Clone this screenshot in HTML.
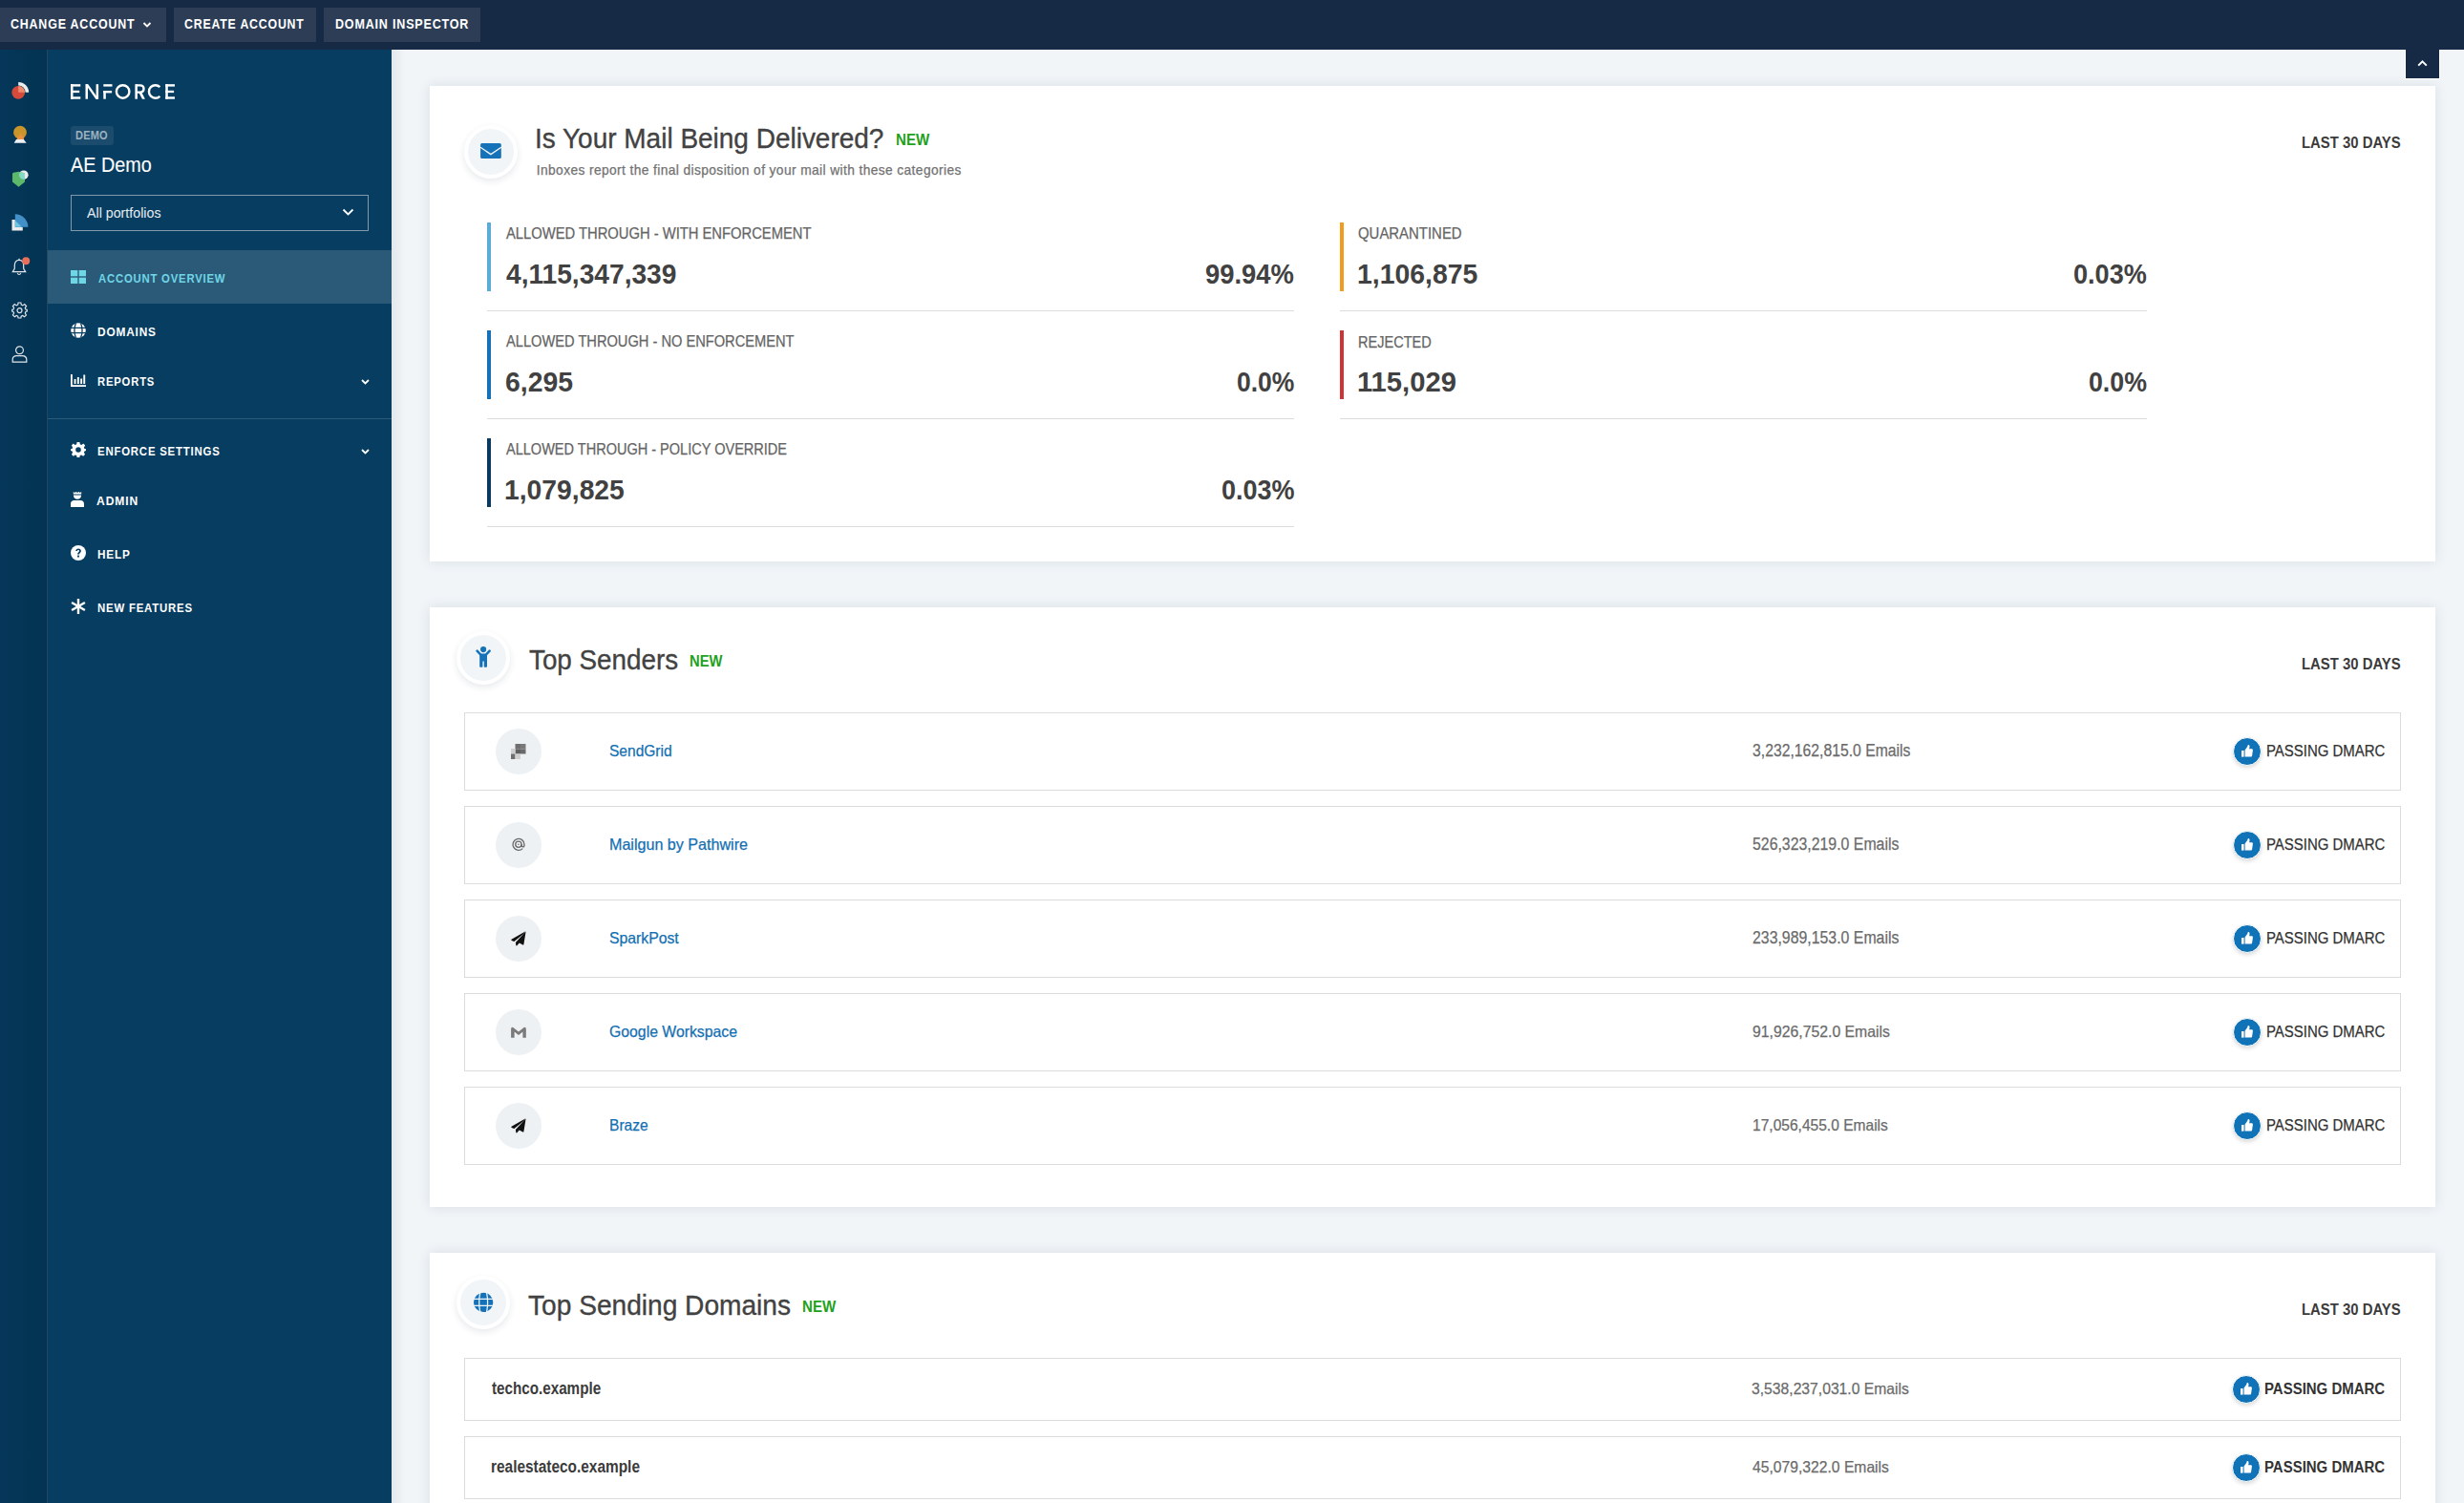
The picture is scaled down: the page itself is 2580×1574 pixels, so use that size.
<!DOCTYPE html><html><head><meta charset="utf-8"><style>
*{margin:0;padding:0;box-sizing:border-box}
html,body{width:2580px;height:1574px;overflow:hidden;background:#f1f5f8;font-family:"Liberation Sans",sans-serif}
.box{position:absolute}
.t{position:absolute;white-space:nowrap}
.hcirc{width:56px;height:56px;border-radius:50%;background:#f2f5f8;border:4px solid #fff;box-shadow:0 3px 7px rgba(20,40,60,.10)}
.lcirc{width:48px;height:48px;border-radius:50%;background:#eef1f3}
.srow{border:1px solid #dcdcdc;background:#fff}
.thumb{width:30px;height:30px;border-radius:50%;background:#1073b8;border:1.5px solid #fff;box-shadow:0 2px 4px rgba(0,0,0,.15)}
.card{background:#fff;box-shadow:0 0 12px rgba(40,60,80,.12)}
</style></head><body>
<div class="box" style="left:0;top:0;width:2580px;height:52px;background:#172a45"></div>
<div class="box" style="left:0px;top:8px;width:174px;height:36px;background:#2d3d56"></div>
<div class="box" style="left:182px;top:8px;width:149px;height:36px;background:#2d3d56"></div>
<div class="box" style="left:339px;top:8px;width:164px;height:36px;background:#2d3d56"></div>
<div class="t" style="left:11.10px;top:19px;font-size:13.75px;line-height:13.75px;letter-spacing:0.9px;font-weight:bold;color:#fff;transform:scaleX(0.904);transform-origin:0 0;">CHANGE ACCOUNT</div>
<div class="t" style="left:193.22px;top:18px;font-size:14.0px;line-height:14.0px;letter-spacing:0.9px;font-weight:bold;color:#fff;transform:scaleX(0.882);transform-origin:0 0;">CREATE ACCOUNT</div>
<div class="t" style="left:350.90px;top:18px;font-size:14.0px;line-height:14.0px;letter-spacing:0.9px;font-weight:bold;color:#fff;transform:scaleX(0.896);transform-origin:0 0;">DOMAIN INSPECTOR</div>
<svg class="box" style="left:149px;top:22px" width="10" height="8" viewBox="0 0 10 8"><path d="M1.5 2 L5 5.5 L8.5 2" stroke="#fff" stroke-width="1.8" fill="none"/></svg>
<div class="box" style="left:0;top:52px;width:49px;height:1522px;background:linear-gradient(to right,#05375a,#033351)"></div>
<div class="box" style="left:49px;top:52px;width:1px;height:1522px;background:#214862"></div>
<div class="box" style="left:50px;top:52px;width:360px;height:1522px;background:#073d61"></div>
<div class="box" style="left:50px;top:262px;width:360px;height:56px;background:#2b5a79"></div>
<div class="box" style="left:50px;top:438px;width:360px;height:1px;background:#2c5b7b"></div>
<div class="box" style="left:74px;top:132px;width:45px;height:20px;background:#1b4b6d;border-radius:3px"></div>
<div class="t" style="left:79.08px;top:136px;font-size:12.0px;line-height:12.0px;letter-spacing:0.2px;font-weight:bold;color:#9cb2c1;transform:scaleX(0.921);transform-origin:0 0;">DEMO</div>
<div class="t" style="left:74.00px;top:163px;font-size:21.25px;line-height:21.25px;letter-spacing:0.0px;font-weight:normal;color:#fff;transform:scaleX(0.933);transform-origin:0 0;-webkit-text-stroke:0.1px #fff;">AE Demo</div>
<div class="box" style="left:74px;top:204px;width:312px;height:38px;border:1px solid #8398aa"></div>
<div class="t" style="left:90.80px;top:216px;font-size:14.75px;line-height:14.75px;letter-spacing:0.0px;font-weight:normal;color:#e8edf1;transform:scaleX(0.965);transform-origin:0 0;">All portfolios</div>
<svg class="box" style="left:358px;top:217px" width="13" height="10" viewBox="0 0 13 10"><path d="M1.5 2.5 L6.5 7.5 L11.5 2.5" stroke="#fff" stroke-width="1.8" fill="none"/></svg>
<div class="t" style="left:102.90px;top:285px;font-size:13.25px;line-height:13.25px;letter-spacing:0.9px;font-weight:bold;color:#6fd6e6;transform:scaleX(0.857);transform-origin:0 0;">ACCOUNT OVERVIEW</div>
<div class="t" style="left:101.70px;top:341px;font-size:13.25px;line-height:13.25px;letter-spacing:0.9px;font-weight:bold;color:#fff;transform:scaleX(0.898);transform-origin:0 0;">DOMAINS</div>
<div class="t" style="left:102.00px;top:394px;font-size:12.5px;line-height:12.5px;letter-spacing:0.9px;font-weight:bold;color:#fff;transform:scaleX(0.902);transform-origin:0 0;">REPORTS</div>
<div class="t" style="left:102.14px;top:466px;font-size:13.25px;line-height:13.25px;letter-spacing:0.9px;font-weight:bold;color:#fff;transform:scaleX(0.862);transform-origin:0 0;">ENFORCE SETTINGS</div>
<div class="t" style="left:101.20px;top:519px;font-size:12.25px;line-height:12.25px;letter-spacing:0.9px;font-weight:bold;color:#fff;transform:scaleX(0.988);transform-origin:0 0;">ADMIN</div>
<div class="t" style="left:102.09px;top:574px;font-size:13.0px;line-height:13.0px;letter-spacing:0.9px;font-weight:bold;color:#fff;transform:scaleX(0.905);transform-origin:0 0;">HELP</div>
<div class="t" style="left:102.14px;top:630px;font-size:13.25px;line-height:13.25px;letter-spacing:0.9px;font-weight:bold;color:#fff;transform:scaleX(0.862);transform-origin:0 0;">NEW FEATURES</div>
<div class="box" style="left:410px;top:52px;width:2170px;height:1522px;background:#f1f5f8"></div>
<div class="box" style="left:410px;top:52px;width:14px;height:1522px;background:linear-gradient(to right,rgba(30,50,70,.07),rgba(30,50,70,0))"></div>
<div class="box card" style="left:450px;top:90px;width:2100px;height:498px"></div>
<div class="box card" style="left:450px;top:636px;width:2100px;height:628px"></div>
<div class="box card" style="left:450px;top:1312px;width:2100px;height:400px"></div>
<svg class="box" style="left:70px;top:85px" width="120" height="22" viewBox="70 85 120 22"><g fill="#fff">
<rect x="74" y="88.2" width="2.5" height="15.5"/><rect x="74" y="88.2" width="10.3" height="2.4"/><rect x="74" y="94.8" width="9.2" height="2.3"/><rect x="74" y="101.3" width="10.3" height="2.4"/>
<rect x="89.5" y="88.2" width="2.5" height="15.5"/><rect x="100.6" y="88.2" width="2.5" height="15.5"/><path d="M89.5 88.2 H92.3 L103.1 103.7 H100.3 Z"/>
<rect x="108.3" y="88.2" width="9.2" height="2.4"/><rect x="108.3" y="95" width="8.8" height="2.4"/><rect x="108.3" y="95" width="2.5" height="8.7"/>
<rect x="141.4" y="88.2" width="2.5" height="15.5"/><path d="M148.2 96.6 L151.9 103.7 H149 L145.4 97 Z"/>
<rect x="173.3" y="88.2" width="2.5" height="15.5"/><rect x="173.3" y="88.2" width="9.7" height="2.4"/><rect x="173.3" y="94.8" width="8.8" height="2.3"/><rect x="173.3" y="101.3" width="9.7" height="2.4"/>
</g><g fill="none" stroke="#fff" stroke-width="2.4">
<circle cx="128.65" cy="95.95" r="6.75"/>
<path d="M142.6 89.4 H146.6 C149.1 89.4 150.5 90.9 150.5 93 C150.5 95.1 149.1 96.6 146.6 96.6 H142.6"/>
<path d="M167.4 91.1 A6.75 6.75 0 1 0 167.4 100.8"/>
</g></svg>
<svg class="box" style="left:74px;top:283px" width="16" height="14" viewBox="0 0 16 14"><g fill="#6fd6e6"><rect x="0" y="0" width="7.3" height="6.3"/><rect x="8.7" y="0" width="7.3" height="6.3"/><rect x="0" y="7.7" width="7.3" height="6.3"/><rect x="8.7" y="7.7" width="7.3" height="6.3"/></g></svg>
<svg class="box" style="left:73.5px;top:337.8px" width="16" height="16" viewBox="0 0 16 16"><circle cx="8" cy="8" r="7.8" fill="#fff"/>
<g stroke="#073d61" stroke-width="1.3" fill="none"><path d="M0 5.3 H16 M0 10.7 H16"/><path d="M5.4 0.4 C3.6 5 3.6 11 5.4 15.6 M10.6 0.4 C12.4 5 12.4 11 10.6 15.6"/></g></svg>
<svg class="box" style="left:74px;top:391.5px" width="16" height="13" viewBox="0 0 16 13"><g fill="#fff"><rect x="0" y="0" width="1.8" height="13"/><rect x="0" y="11.2" width="16" height="1.8"/><rect x="3.6" y="5" width="1.9" height="5"/><rect x="6.9" y="3" width="1.9" height="7"/><rect x="10.2" y="4.5" width="1.9" height="5.5"/><rect x="13.3" y="0.5" width="1.9" height="9.5"/></g></svg>
<svg class="box" style="left:74px;top:463px" width="16" height="16" viewBox="0 0 16 16"><path fill="#fff" fill-rule="evenodd" d="M6.6 0 H9.4 L9.8 2.2 L11.4 2.9 L13.3 1.6 L15.2 3.6 L13.9 5.4 L14.5 7 L16 7.2 V9.1 L14.5 9.4 L13.9 11 L15.1 12.8 L13.1 14.8 L11.3 13.5 L9.7 14.1 L9.4 16 H6.6 L6.2 14.1 L4.6 13.5 L2.8 14.8 L0.9 12.8 L2.1 11 L1.5 9.4 L0 9.1 V7.2 L1.5 7 L2.1 5.4 L0.9 3.6 L2.8 1.6 L4.6 2.9 L6.2 2.2 Z M8 5.2 A2.8 2.8 0 1 0 8 10.8 A2.8 2.8 0 1 0 8 5.2 Z"/></svg>
<svg class="box" style="left:74px;top:515px" width="14" height="16" viewBox="0 0 14 16"><g fill="#fff"><path d="M2.8 0 L4.2 1 L5.6 0 L7 1 L8.4 0 L9.8 1 L11.2 0 V2.4 H2.8 Z"/><path d="M2.9 3.4 H11.1 C11.1 6 9.4 7.8 7 7.8 C4.6 7.8 2.9 6 2.9 3.4 Z"/><path d="M0 16 V12.4 C0 10.4 1.6 9 3.6 9 H10.4 C12.4 9 14 10.4 14 12.4 V16 Z"/></g></svg>
<svg class="box" style="left:74px;top:570.5px" width="16" height="16" viewBox="0 0 16 16"><circle cx="8" cy="8" r="8" fill="#fff"/><path d="M5.3 6.1 C5.3 4.4 6.5 3.4 8.1 3.4 C9.7 3.4 10.9 4.4 10.9 5.9 C10.9 7.7 8.9 7.9 8.9 9.6 H7.1 C7.1 7.2 9 7.2 9 5.9 C9 5.3 8.6 4.9 8 4.9 C7.4 4.9 7 5.4 7 6.1 Z" fill="#073d61"/><rect x="7.05" y="10.6" width="1.9" height="1.9" fill="#073d61"/></svg>
<svg class="box" style="left:74px;top:627px" width="16" height="16" viewBox="0 0 16 16"><g stroke="#fff" stroke-width="2.4"><path d="M8 0 V16"/><path d="M1.1 4 L14.9 12"/><path d="M1.1 12 L14.9 4"/></g></svg>
<svg class="box" style="left:378px;top:396.5px" width="9" height="6" viewBox="0 0 9 6"><path d="M1 1 L4.5 4.5 L8 1" stroke="#fff" stroke-width="1.8" fill="none"/></svg>
<svg class="box" style="left:378px;top:470px" width="9" height="6" viewBox="0 0 9 6"><path d="M1 1 L4.5 4.5 L8 1" stroke="#fff" stroke-width="1.8" fill="none"/></svg>
<svg class="box" style="left:0;top:52px" width="49" height="210" viewBox="0 52 49 210">
<defs><clipPath id="shc"><path d="M13 182.2 Q13 181 14.2 180.8 L19.6 179.8 L26 181.2 V190.5 L19.5 195.7 L13 190.5 Z"/></clipPath></defs>
<circle cx="19.2" cy="96.8" r="6.9" fill="#d64a3c"/>
<path d="M19.2 96.8 V89.9 A6.9 6.9 0 0 1 26.1 96.8 Z" fill="#ec8a6a"/>
<path d="M19.2 85.9 A10.9 10.9 0 0 1 30.1 96.8 H26.6 A7.4 7.4 0 0 0 19.2 89.4 Z" fill="#ececec"/>
<circle cx="21" cy="138.7" r="6.9" fill="#c9952b"/>
<path d="M17.6 146 L19.2 142 L20.4 143 L21.6 138.8 L23.2 142.5 L24.2 141.8 L25.2 146 Z" fill="#ee9040"/>
<path d="M17 145.9 H24.8 L27.7 149.7 H14.7 Z" fill="#eef1f4"/>
<circle cx="24.8" cy="183.2" r="4.8" fill="#ececec"/>
<path d="M13 182.2 Q13 181 14.2 180.8 L19.6 179.8 L26 181.2 V190.5 L19.5 195.7 L13 190.5 Z" fill="#5cb96a"/>
<circle cx="24.8" cy="183.2" r="4.8" fill="#86d8c4" clip-path="url(#shc)"/>
<path d="M12.5 230 H15.9 V238 H23.8 V241.4 H12.5 Z" fill="#ececec"/>
<path d="M15.8 237.8 V224.2 A13.6 13.6 0 0 1 29.4 237.8 Z" fill="#4390c8"/>
<path d="M15.9 231 V237.8 H23 Z" fill="#6cc4e0"/>
</svg>
<svg class="box" style="left:12px;top:269px" width="21" height="20" viewBox="0 0 21 20"><path d="M8 3.4 C4.6 3.4 3.3 6 3.3 9 V12.3 L1.3 15.6 H14.7 L12.7 12.3 V9 C12.7 6 11.4 3.4 8 3.4 Z" stroke="#e0e6ea" stroke-width="1.2" fill="none"/><path d="M6.3 16.8 C6.6 18 7.3 18.5 8 18.5 C8.7 18.5 9.4 18 9.7 16.8" stroke="#e0e6ea" stroke-width="1.1" fill="none"/><path d="M8 1.8 V3.4" stroke="#e0e6ea" stroke-width="1.2"/><circle cx="15.2" cy="4.3" r="4" fill="#e8705a"/></svg>
<svg class="box" style="left:12px;top:316px" width="17" height="18" viewBox="0 0 17 18"><path fill="none" stroke="#e0e6ea" stroke-width="1.2" d="M7.1 1 H9.9 L10.3 3.2 L11.8 3.9 L13.7 2.6 L15.6 4.6 L14.3 6.4 L14.9 8 L16.3 8.3 V10.1 L14.9 10.4 L14.3 12 L15.5 13.8 L13.5 15.8 L11.7 14.5 L10.2 15.1 L9.9 17 H7.1 L6.7 15.1 L5.2 14.5 L3.4 15.8 L1.4 13.8 L2.6 12 L2 10.4 L0.7 10.1 V8.3 L2 8 L2.6 6.4 L1.4 4.6 L3.3 2.6 L5.2 3.9 L6.7 3.2 Z"/><circle cx="8.5" cy="9.1" r="2.5" fill="none" stroke="#e0e6ea" stroke-width="1.2"/></svg>
<svg class="box" style="left:12px;top:362px" width="17" height="18" viewBox="0 0 17 18"><circle cx="8.5" cy="4.8" r="3.9" fill="none" stroke="#e0e6ea" stroke-width="1.2"/><path d="M1.2 17.2 V14.6 C1.2 12.2 3 10.6 5.4 10.6 H11.6 C14 10.6 15.8 12.2 15.8 14.6 V17.2 Z" fill="none" stroke="#e0e6ea" stroke-width="1.2"/></svg>
<div class="box" style="left:2518px;top:52px;width:37px;height:31px;background:#fff"></div>
<div class="box" style="left:2519px;top:52px;width:35px;height:30px;background:#172a45"></div>
<svg class="box" style="left:2531px;top:62px" width="11" height="8" viewBox="0 0 11 8"><path d="M1.2 6.6 L5.5 2.3 L9.8 6.6" stroke="#fff" stroke-width="2" fill="none"/></svg>
<div class="box hcirc" style="left:486px;top:130.5px"></div>
<svg class="box" style="left:480px;top:125px" width="70" height="70" viewBox="480 125 70 70"><rect x="503.1" y="150" width="21.7" height="16" rx="1.6" fill="#1572b9"/><path d="M503.1 154.3 L513.95 161.6 L524.8 154.3" stroke="#f2f5f8" stroke-width="1.3" fill="none"/></svg>
<div class="t" style="left:559.88px;top:131px;font-size:28.75px;line-height:28.75px;letter-spacing:0.0px;font-weight:normal;color:#424242;transform:scaleX(0.973);transform-origin:0 0;-webkit-text-stroke:0.35px #424242;">Is Your Mail Being Delivered?</div>
<div class="t" style="left:938.16px;top:139px;font-size:16.0px;line-height:16.0px;letter-spacing:0.0px;font-weight:bold;color:#22a11c;transform:scaleX(0.944);transform-origin:0 0;">NEW</div>
<div class="t" style="left:561.80px;top:172px;font-size:13.75px;line-height:13.75px;letter-spacing:0.4px;font-weight:normal;color:#727272;-webkit-text-stroke:0.25px #727272;">Inboxes report the final disposition of your mail with these categories</div>
<div class="t" style="left:2409.91px;top:142px;font-size:16.75px;line-height:16.75px;letter-spacing:0.0px;font-weight:bold;color:#3b3b3b;transform:scaleX(0.888);transform-origin:0 0;">LAST 30 DAYS</div>
<div class="box" style="left:510px;top:233px;width:4px;height:72px;background:#5aabd6"></div>
<div class="t" style="left:530.20px;top:237px;font-size:16.75px;line-height:16.75px;letter-spacing:0.0px;font-weight:normal;color:#646464;transform:scaleX(0.881);transform-origin:0 0;-webkit-text-stroke:0.25px #646464;">ALLOWED THROUGH - WITH ENFORCEMENT</div>
<div class="t" style="left:530.20px;top:273px;font-size:29.25px;line-height:29.25px;letter-spacing:0.0px;font-weight:bold;color:#414141;transform:scaleX(0.962);transform-origin:0 0;">4,115,347,339</div>
<div class="t" style="left:1262.46px;top:273px;font-size:29.25px;line-height:29.25px;letter-spacing:0.0px;font-weight:bold;color:#414141;transform:scaleX(0.937);transform-origin:0 0;">99.94%</div>
<div class="box" style="left:510px;top:325px;width:845px;height:1px;background:#dcdcdc"></div>
<div class="box" style="left:510px;top:346px;width:4px;height:72px;background:#1570b8"></div>
<div class="t" style="left:530.20px;top:350px;font-size:16.75px;line-height:16.75px;letter-spacing:0.0px;font-weight:normal;color:#646464;transform:scaleX(0.874);transform-origin:0 0;-webkit-text-stroke:0.25px #646464;">ALLOWED THROUGH - NO ENFORCEMENT</div>
<div class="t" style="left:529.23px;top:386px;font-size:29.25px;line-height:29.25px;letter-spacing:0.0px;font-weight:bold;color:#414141;transform:scaleX(0.97);transform-origin:0 0;">6,295</div>
<div class="t" style="left:1294.60px;top:386px;font-size:29.25px;line-height:29.25px;letter-spacing:0.0px;font-weight:bold;color:#414141;transform:scaleX(0.905);transform-origin:0 0;">0.0%</div>
<div class="box" style="left:510px;top:438px;width:845px;height:1px;background:#dcdcdc"></div>
<div class="box" style="left:510px;top:459px;width:4px;height:72px;background:#0a3a5e"></div>
<div class="t" style="left:530.20px;top:463px;font-size:16.75px;line-height:16.75px;letter-spacing:0.0px;font-weight:normal;color:#646464;transform:scaleX(0.867);transform-origin:0 0;-webkit-text-stroke:0.25px #646464;">ALLOWED THROUGH - POLICY OVERRIDE</div>
<div class="t" style="left:528.27px;top:499px;font-size:29.25px;line-height:29.25px;letter-spacing:0.0px;font-weight:bold;color:#414141;transform:scaleX(0.967);transform-origin:0 0;">1,079,825</div>
<div class="t" style="left:1278.58px;top:499px;font-size:29.25px;line-height:29.25px;letter-spacing:0.0px;font-weight:bold;color:#414141;transform:scaleX(0.923);transform-origin:0 0;">0.03%</div>
<div class="box" style="left:510px;top:551px;width:845px;height:1px;background:#dcdcdc"></div>
<div class="box" style="left:1403px;top:233px;width:4px;height:72px;background:#f19c1b"></div>
<div class="t" style="left:1422.42px;top:236px;font-size:17.0px;line-height:17.0px;letter-spacing:0.0px;font-weight:normal;color:#646464;transform:scaleX(0.878);transform-origin:0 0;-webkit-text-stroke:0.25px #646464;">QUARANTINED</div>
<div class="t" style="left:1421.36px;top:273px;font-size:29.25px;line-height:29.25px;letter-spacing:0.0px;font-weight:bold;color:#414141;transform:scaleX(0.971);transform-origin:0 0;">1,106,875</div>
<div class="t" style="left:2171.07px;top:273px;font-size:29.25px;line-height:29.25px;letter-spacing:0.0px;font-weight:bold;color:#414141;transform:scaleX(0.926);transform-origin:0 0;">0.03%</div>
<div class="box" style="left:1403px;top:325px;width:845px;height:1px;background:#dcdcdc"></div>
<div class="box" style="left:1403px;top:346px;width:4px;height:72px;background:#cf3434"></div>
<div class="t" style="left:1422.44px;top:350px;font-size:17.0px;line-height:17.0px;letter-spacing:0.0px;font-weight:normal;color:#646464;transform:scaleX(0.856);transform-origin:0 0;-webkit-text-stroke:0.25px #646464;">REJECTED</div>
<div class="t" style="left:1421.30px;top:386px;font-size:29.25px;line-height:29.25px;letter-spacing:0.0px;font-weight:bold;color:#414141;transform:scaleX(0.998);transform-origin:0 0;">115,029</div>
<div class="t" style="left:2186.69px;top:386px;font-size:29.25px;line-height:29.25px;letter-spacing:0.0px;font-weight:bold;color:#414141;transform:scaleX(0.914);transform-origin:0 0;">0.0%</div>
<div class="box" style="left:1403px;top:438px;width:845px;height:1px;background:#dcdcdc"></div>
<div class="box hcirc" style="left:478px;top:660.5px"></div>
<svg class="box" style="left:480px;top:660px" width="60" height="60" viewBox="480 660 60 60"><g fill="#1572b9"><circle cx="506.1" cy="680.1" r="3.1"/><path d="M502.2 686.2 Q502.2 684.6 503.8 684.6 H508.4 Q510 684.6 510 686.2 V698 Q510 698.8 509.2 698.8 H507.6 Q506.8 698.8 506.8 698 V692.6 H505.4 V698 Q505.4 698.8 504.6 698.8 H503 Q502.2 698.8 502.2 698 Z"/></g><path d="M503.6 686 L499.6 681.6 M508.6 686 L512.6 681.6" stroke="#1572b9" stroke-width="2.5" stroke-linecap="round"/></svg>
<div class="t" style="left:553.94px;top:677px;font-size:29.0px;line-height:29.0px;letter-spacing:0.0px;font-weight:normal;color:#424242;transform:scaleX(0.959);transform-origin:0 0;-webkit-text-stroke:0.35px #424242;">Top Senders</div>
<div class="t" style="left:722.36px;top:685px;font-size:15.75px;line-height:15.75px;letter-spacing:0.0px;font-weight:bold;color:#22a11c;transform:scaleX(0.936);transform-origin:0 0;">NEW</div>
<div class="t" style="left:2409.91px;top:688px;font-size:16.75px;line-height:16.75px;letter-spacing:0.0px;font-weight:bold;color:#3b3b3b;transform:scaleX(0.888);transform-origin:0 0;">LAST 30 DAYS</div>
<div class="box srow" style="left:486px;top:746px;width:2028px;height:82px"></div>
<div class="box lcirc" style="left:519px;top:763px"></div>
<svg class="box" style="left:535px;top:779px" width="16" height="16" viewBox="0 0 16 16"><g><rect x="4.5" y="0" width="5.5" height="5.5" fill="#6f6f6f"/><rect x="10" y="0" width="5.5" height="5.5" fill="#7a7a7a"/><rect x="4.5" y="5.5" width="5.5" height="5" fill="#5f5f5f"/><rect x="10" y="5.5" width="5.5" height="5" fill="#6a6a6a"/><rect x="0" y="5" width="4.5" height="5.5" fill="#cfcfcf"/><rect x="0" y="10.5" width="4.5" height="5.5" fill="#6f6f6f"/><rect x="4.5" y="10.5" width="5.5" height="5.5" fill="#cfcfcf"/></g></svg>
<div class="t" style="left:638.06px;top:778px;font-size:16.5px;line-height:16.5px;letter-spacing:0.0px;font-weight:normal;color:#146fb2;transform:scaleX(0.941);transform-origin:0 0;-webkit-text-stroke:0.25px #146fb2;">SendGrid</div>
<div class="t" style="left:1834.92px;top:777px;font-size:18.0px;line-height:18.0px;letter-spacing:0.0px;font-weight:normal;color:#6b6b6b;transform:scaleX(0.875);transform-origin:0 0;-webkit-text-stroke:0.25px #6b6b6b;">3,232,162,815.0 Emails</div>
<div class="box thumb" style="left:2338px;top:772px"></div>
<svg class="box" style="left:2347px;top:780.3px" width="12" height="13" viewBox="0 0 12 13"><rect x="0" y="6" width="2.6" height="6.6" fill="#fff"/><path d="M3.6 12.6 V5.4 L6.2 2 C6.5 1 6.5 0.1 7.4 0.1 C8.3 0.1 8.6 1.2 8.5 2.4 L8.1 4.3 H10.7 C11.5 4.3 12 4.9 11.9 5.7 L11.1 11.5 C11 12.2 10.4 12.6 9.8 12.6 Z" fill="#fff"/></svg>
<div class="t" style="left:2372.91px;top:779px;font-size:16.75px;line-height:16.75px;letter-spacing:0.0px;font-weight:normal;color:#333;transform:scaleX(0.893);transform-origin:0 0;-webkit-text-stroke:0.25px #333;">PASSING DMARC</div>
<div class="box srow" style="left:486px;top:844px;width:2028px;height:82px"></div>
<div class="box lcirc" style="left:519px;top:861px"></div>
<svg class="box" style="left:527px;top:869px" width="32" height="32" viewBox="527 869 32 32"><g fill="none" stroke="#6a6a6a" stroke-width="1.35"><path d="M547.3 888.6 A6 6 0 1 1 549 884.4 C549 886 548.4 886.9 547.6 886.9 C546.8 886.9 546.3 886.2 546.3 885.2 V884.3"/><circle cx="542.9" cy="884.3" r="3.15"/></g><circle cx="542.9" cy="884.3" r="0.8" fill="#6a6a6a"/></svg>
<div class="t" style="left:638.02px;top:876px;font-size:16.5px;line-height:16.5px;letter-spacing:0.0px;font-weight:normal;color:#146fb2;transform:scaleX(0.976);transform-origin:0 0;-webkit-text-stroke:0.25px #146fb2;">Mailgun by Pathwire</div>
<div class="t" style="left:1834.92px;top:875px;font-size:18.0px;line-height:18.0px;letter-spacing:0.0px;font-weight:normal;color:#6b6b6b;transform:scaleX(0.881);transform-origin:0 0;-webkit-text-stroke:0.25px #6b6b6b;">526,323,219.0 Emails</div>
<div class="box thumb" style="left:2338px;top:870px"></div>
<svg class="box" style="left:2347px;top:878.3px" width="12" height="13" viewBox="0 0 12 13"><rect x="0" y="6" width="2.6" height="6.6" fill="#fff"/><path d="M3.6 12.6 V5.4 L6.2 2 C6.5 1 6.5 0.1 7.4 0.1 C8.3 0.1 8.6 1.2 8.5 2.4 L8.1 4.3 H10.7 C11.5 4.3 12 4.9 11.9 5.7 L11.1 11.5 C11 12.2 10.4 12.6 9.8 12.6 Z" fill="#fff"/></svg>
<div class="t" style="left:2372.91px;top:877px;font-size:16.75px;line-height:16.75px;letter-spacing:0.0px;font-weight:normal;color:#333;transform:scaleX(0.893);transform-origin:0 0;-webkit-text-stroke:0.25px #333;">PASSING DMARC</div>
<div class="box srow" style="left:486px;top:942px;width:2028px;height:82px"></div>
<div class="box lcirc" style="left:519px;top:959px"></div>
<svg class="box" style="left:527px;top:967px" width="32" height="32" viewBox="527 967 32 32"><g fill="#111"><path d="M550.4 975.3 L535.5 983.7 Q535 984.4 535.7 984.9 L538.3 985.9 L548.3 978 Z"/><path d="M550.6 975.6 L539.9 986.9 L540.3 990 Q540.7 990.8 541.3 990.2 L543.8 987.6 L547.4 989.5 Q548.2 989.9 548.4 989 Z"/></g></svg>
<div class="t" style="left:638.04px;top:974px;font-size:16.5px;line-height:16.5px;letter-spacing:0.0px;font-weight:normal;color:#146fb2;transform:scaleX(0.955);transform-origin:0 0;-webkit-text-stroke:0.25px #146fb2;">SparkPost</div>
<div class="t" style="left:1834.92px;top:973px;font-size:18.0px;line-height:18.0px;letter-spacing:0.0px;font-weight:normal;color:#6b6b6b;transform:scaleX(0.881);transform-origin:0 0;-webkit-text-stroke:0.25px #6b6b6b;">233,989,153.0 Emails</div>
<div class="box thumb" style="left:2338px;top:968px"></div>
<svg class="box" style="left:2347px;top:976.3px" width="12" height="13" viewBox="0 0 12 13"><rect x="0" y="6" width="2.6" height="6.6" fill="#fff"/><path d="M3.6 12.6 V5.4 L6.2 2 C6.5 1 6.5 0.1 7.4 0.1 C8.3 0.1 8.6 1.2 8.5 2.4 L8.1 4.3 H10.7 C11.5 4.3 12 4.9 11.9 5.7 L11.1 11.5 C11 12.2 10.4 12.6 9.8 12.6 Z" fill="#fff"/></svg>
<div class="t" style="left:2372.91px;top:975px;font-size:16.75px;line-height:16.75px;letter-spacing:0.0px;font-weight:normal;color:#333;transform:scaleX(0.893);transform-origin:0 0;-webkit-text-stroke:0.25px #333;">PASSING DMARC</div>
<div class="box srow" style="left:486px;top:1040px;width:2028px;height:82px"></div>
<div class="box lcirc" style="left:519px;top:1057px"></div>
<svg class="box" style="left:527px;top:1065px" width="32" height="32" viewBox="527 1065 32 32"><path d="M535.1 1086.8 V1077.6 Q535.1 1075.2 537.3 1076.1 L543 1080.4 L548.6 1076.1 Q550.8 1075.2 550.8 1077.6 V1086.8 H547.4 V1080.6 L543 1084 L538.6 1080.6 V1086.8 Z" fill="#7a7a7a"/></svg>
<div class="t" style="left:638.04px;top:1072px;font-size:16.5px;line-height:16.5px;letter-spacing:0.0px;font-weight:normal;color:#146fb2;transform:scaleX(0.957);transform-origin:0 0;-webkit-text-stroke:0.25px #146fb2;">Google Workspace</div>
<div class="t" style="left:1834.84px;top:1072px;font-size:16.5px;line-height:16.5px;letter-spacing:0.0px;font-weight:normal;color:#6b6b6b;transform:scaleX(0.957);transform-origin:0 0;-webkit-text-stroke:0.25px #6b6b6b;">91,926,752.0 Emails</div>
<div class="box thumb" style="left:2338px;top:1066px"></div>
<svg class="box" style="left:2347px;top:1074.3px" width="12" height="13" viewBox="0 0 12 13"><rect x="0" y="6" width="2.6" height="6.6" fill="#fff"/><path d="M3.6 12.6 V5.4 L6.2 2 C6.5 1 6.5 0.1 7.4 0.1 C8.3 0.1 8.6 1.2 8.5 2.4 L8.1 4.3 H10.7 C11.5 4.3 12 4.9 11.9 5.7 L11.1 11.5 C11 12.2 10.4 12.6 9.8 12.6 Z" fill="#fff"/></svg>
<div class="t" style="left:2372.91px;top:1073px;font-size:16.75px;line-height:16.75px;letter-spacing:0.0px;font-weight:normal;color:#333;transform:scaleX(0.893);transform-origin:0 0;-webkit-text-stroke:0.25px #333;">PASSING DMARC</div>
<div class="box srow" style="left:486px;top:1138px;width:2028px;height:82px"></div>
<div class="box lcirc" style="left:519px;top:1155px"></div>
<svg class="box" style="left:527px;top:1163px" width="32" height="32" viewBox="527 967 32 32"><g fill="#111"><path d="M550.4 975.3 L535.5 983.7 Q535 984.4 535.7 984.9 L538.3 985.9 L548.3 978 Z"/><path d="M550.6 975.6 L539.9 986.9 L540.3 990 Q540.7 990.8 541.3 990.2 L543.8 987.6 L547.4 989.5 Q548.2 989.9 548.4 989 Z"/></g></svg>
<div class="t" style="left:638.06px;top:1170px;font-size:16.5px;line-height:16.5px;letter-spacing:0.0px;font-weight:normal;color:#146fb2;transform:scaleX(0.943);transform-origin:0 0;-webkit-text-stroke:0.25px #146fb2;">Braze</div>
<div class="t" style="left:1834.86px;top:1170px;font-size:16.5px;line-height:16.5px;letter-spacing:0.0px;font-weight:normal;color:#6b6b6b;transform:scaleX(0.943);transform-origin:0 0;-webkit-text-stroke:0.25px #6b6b6b;">17,056,455.0 Emails</div>
<div class="box thumb" style="left:2338px;top:1164px"></div>
<svg class="box" style="left:2347px;top:1172.3px" width="12" height="13" viewBox="0 0 12 13"><rect x="0" y="6" width="2.6" height="6.6" fill="#fff"/><path d="M3.6 12.6 V5.4 L6.2 2 C6.5 1 6.5 0.1 7.4 0.1 C8.3 0.1 8.6 1.2 8.5 2.4 L8.1 4.3 H10.7 C11.5 4.3 12 4.9 11.9 5.7 L11.1 11.5 C11 12.2 10.4 12.6 9.8 12.6 Z" fill="#fff"/></svg>
<div class="t" style="left:2372.91px;top:1171px;font-size:16.75px;line-height:16.75px;letter-spacing:0.0px;font-weight:normal;color:#333;transform:scaleX(0.893);transform-origin:0 0;-webkit-text-stroke:0.25px #333;">PASSING DMARC</div>
<div class="box hcirc" style="left:478px;top:1336px"></div>
<svg class="box" style="left:480px;top:1338px" width="60" height="60" viewBox="480 1338 60 60"><circle cx="506.15" cy="1363.9" r="10.2" fill="#1572b9"/><g stroke="#f2f5f8" stroke-width="1.25" fill="none"><path d="M495 1360.4 H517.3 M495 1367.4 H517.3"/><path d="M502.8 1353.4 Q500.6 1363.9 502.8 1374.4 M509.5 1353.4 Q511.7 1363.9 509.5 1374.4"/></g></svg>
<div class="t" style="left:553.45px;top:1352px;font-size:29.5px;line-height:29.5px;letter-spacing:0.0px;font-weight:normal;color:#424242;transform:scaleX(0.953);transform-origin:0 0;-webkit-text-stroke:0.35px #424242;">Top Sending Domains</div>
<div class="t" style="left:840.44px;top:1361px;font-size:15.75px;line-height:15.75px;letter-spacing:0.0px;font-weight:bold;color:#22a11c;transform:scaleX(0.958);transform-origin:0 0;">NEW</div>
<div class="t" style="left:2409.91px;top:1364px;font-size:16.75px;line-height:16.75px;letter-spacing:0.0px;font-weight:bold;color:#3b3b3b;transform:scaleX(0.888);transform-origin:0 0;">LAST 30 DAYS</div>
<div class="box srow" style="left:486px;top:1422px;width:2028px;height:66px"></div>
<div class="t" style="left:515.10px;top:1446px;font-size:17.5px;line-height:17.5px;letter-spacing:0.0px;font-weight:bold;color:#3b3b3b;transform:scaleX(0.869);transform-origin:0 0;">techco.example</div>
<div class="t" style="left:1833.85px;top:1446px;font-size:16.5px;line-height:16.5px;letter-spacing:0.0px;font-weight:normal;color:#6b6b6b;transform:scaleX(0.951);transform-origin:0 0;-webkit-text-stroke:0.25px #6b6b6b;">3,538,237,031.0 Emails</div>
<div class="box thumb" style="left:2337px;top:1440px"></div>
<svg class="box" style="left:2346px;top:1448.3px" width="12" height="13" viewBox="0 0 12 13"><rect x="0" y="6" width="2.6" height="6.6" fill="#fff"/><path d="M3.6 12.6 V5.4 L6.2 2 C6.5 1 6.5 0.1 7.4 0.1 C8.3 0.1 8.6 1.2 8.5 2.4 L8.1 4.3 H10.7 C11.5 4.3 12 4.9 11.9 5.7 L11.1 11.5 C11 12.2 10.4 12.6 9.8 12.6 Z" fill="#fff"/></svg>
<div class="t" style="left:2371.16px;top:1447px;font-size:16.0px;line-height:16.0px;letter-spacing:0.0px;font-weight:bold;color:#333;transform:scaleX(0.935);transform-origin:0 0;">PASSING DMARC</div>
<div class="box srow" style="left:486px;top:1504px;width:2028px;height:66px"></div>
<div class="t" style="left:514.22px;top:1528px;font-size:17.5px;line-height:17.5px;letter-spacing:0.0px;font-weight:bold;color:#3b3b3b;transform:scaleX(0.881);transform-origin:0 0;">realestateco.example</div>
<div class="t" style="left:1834.80px;top:1528px;font-size:16.5px;line-height:16.5px;letter-spacing:0.0px;font-weight:normal;color:#6b6b6b;transform:scaleX(0.95);transform-origin:0 0;-webkit-text-stroke:0.25px #6b6b6b;">45,079,322.0 Emails</div>
<div class="box thumb" style="left:2337px;top:1522px"></div>
<svg class="box" style="left:2346px;top:1530.3px" width="12" height="13" viewBox="0 0 12 13"><rect x="0" y="6" width="2.6" height="6.6" fill="#fff"/><path d="M3.6 12.6 V5.4 L6.2 2 C6.5 1 6.5 0.1 7.4 0.1 C8.3 0.1 8.6 1.2 8.5 2.4 L8.1 4.3 H10.7 C11.5 4.3 12 4.9 11.9 5.7 L11.1 11.5 C11 12.2 10.4 12.6 9.8 12.6 Z" fill="#fff"/></svg>
<div class="t" style="left:2371.16px;top:1529px;font-size:16.0px;line-height:16.0px;letter-spacing:0.0px;font-weight:bold;color:#333;transform:scaleX(0.935);transform-origin:0 0;">PASSING DMARC</div>
</body></html>
